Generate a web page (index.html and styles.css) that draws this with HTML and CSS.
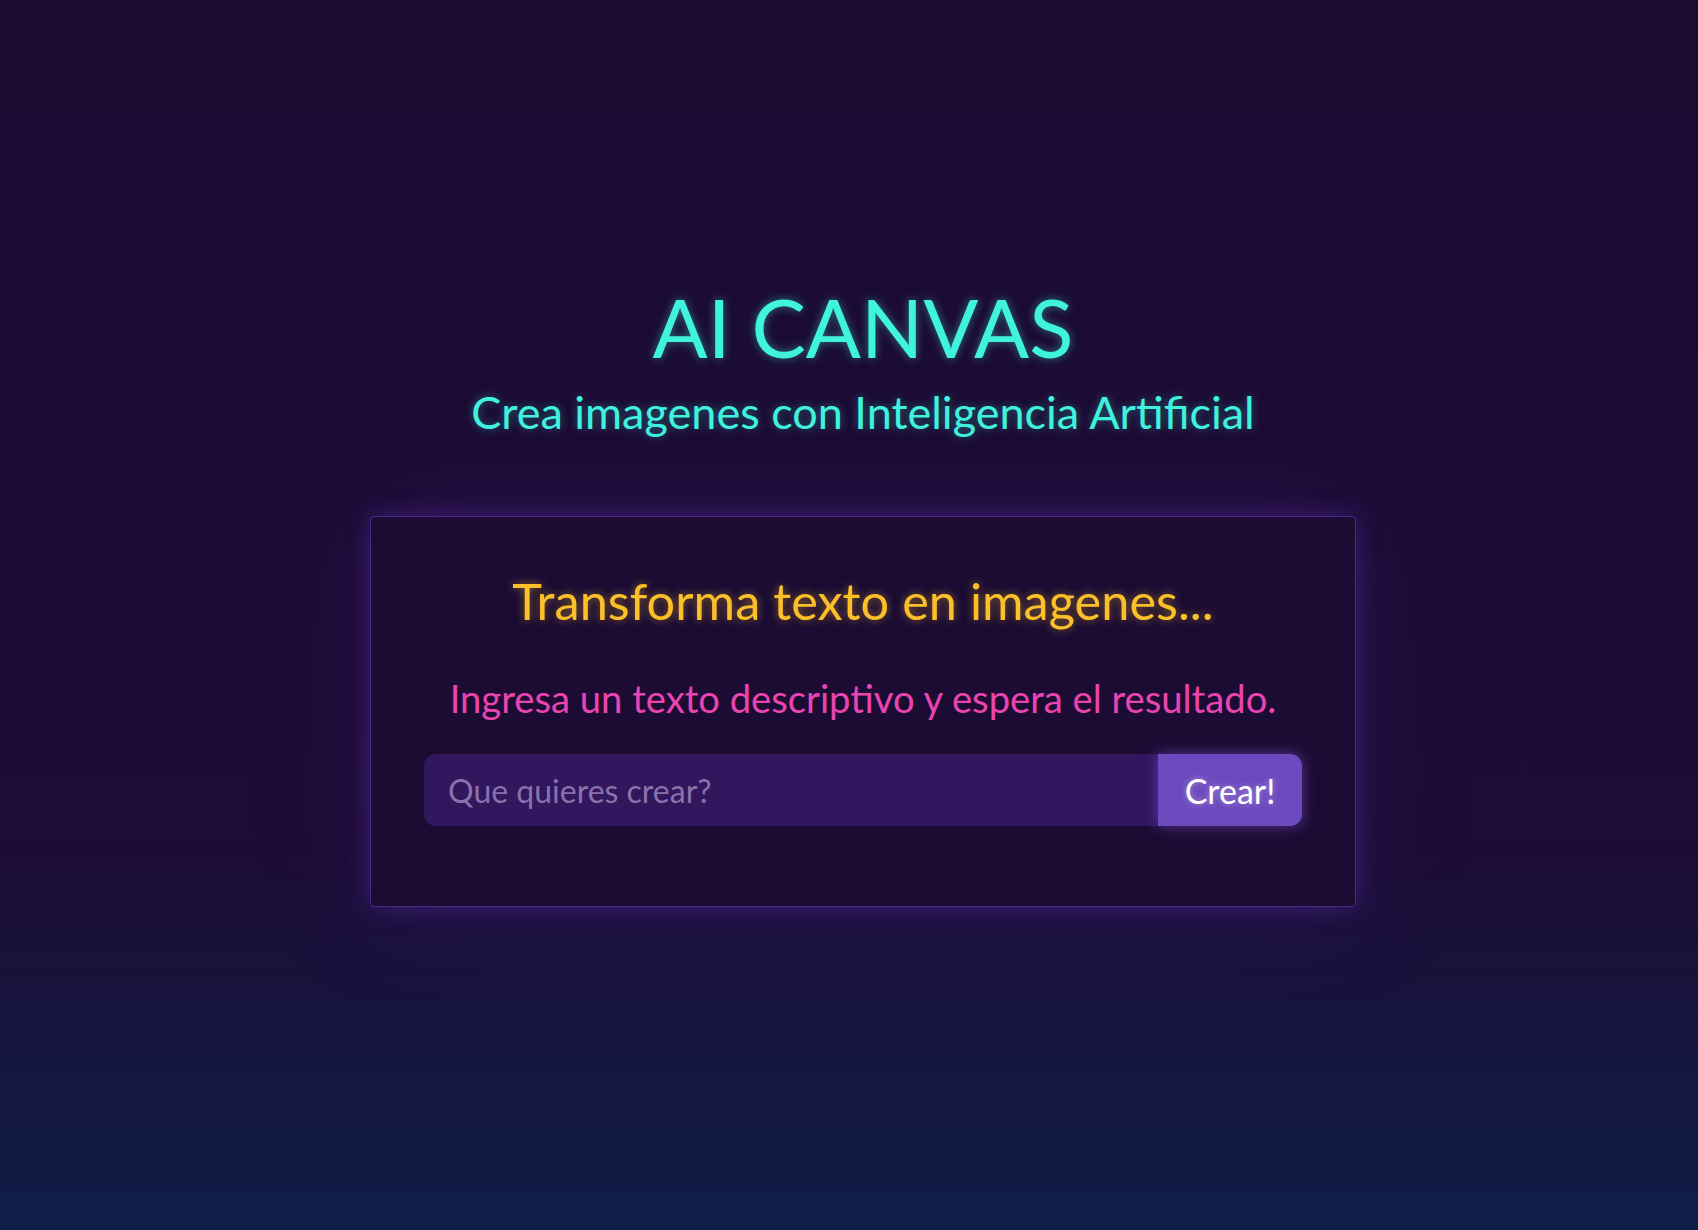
FILE: index.html
```html
<!DOCTYPE html>
<html lang="es">
<head>
<meta charset="utf-8">
<title>AI Canvas</title>
<link rel="stylesheet" href="styles.css">
</head>
<body>
<main class="page">
  <header class="hero">
    <h1 class="title">AI CANVAS</h1>
    <p class="subtitle">Crea imagenes con Inteligencia Artificial</p>
  </header>
  <section class="card">
    <h2 class="card-title">Transforma texto en imagenes...</h2>
    <p class="card-text">Ingresa un texto descriptivo y espera el resultado.</p>
    <form class="prompt">
      <input class="prompt-input" type="text" placeholder="Que quieres crear?">
      <button class="prompt-btn" type="button">Crear!</button>
    </form>
  </section>
</main>
</body>
</html>
```

FILE: styles.css
```css
* { box-sizing: border-box; }
html, body { margin: 0; height: 100%; }
body {
  font-family: Lato, "Open Sans", sans-serif;
  background: linear-gradient(180deg, #1b0b33 0%, #1d0c35 68%, #0f1e47 100%);
  min-height: 1230px;
}
.page {
  display: flex;
  flex-direction: column;
  align-items: center;
  padding-top: 278px;
  padding-left: 28px;
}
.hero {
  display: flex;
  flex-direction: column;
  align-items: center;
}
.title {
  margin: 0;
  font-size: 81.5px;
  font-weight: 400;
  line-height: 1.2;
  color: #40f3df;
  text-shadow: 0 0 10px rgba(64, 245, 224, 0.45);
}
.subtitle {
  margin: 9px 0 0;
  font-size: 45px;
  line-height: 1.2;
  color: #40f3df;
  text-shadow: 0 0 10px rgba(64, 245, 224, 0.4);
}
.card {
  margin-top: 77px;
  width: 986px;
  padding: 54px 53px 80px;
  border: 1px solid #4a2888;
  border-radius: 4px;
  background: #1c0c34;
  box-shadow: 0 0 24px rgba(120, 60, 220, 0.35), 0 0 120px rgba(90, 40, 180, 0.18);
  display: flex;
  flex-direction: column;
  align-items: center;
}
.card-title {
  margin: 0;
  font-size: 50.5px;
  font-weight: 400;
  line-height: 1.2;
  color: #fbbf2a;
  text-shadow: 0 0 8px rgba(251, 191, 36, 0.5);
}
.card-text {
  margin: 45px 0 0;
  font-size: 38.2px;
  line-height: 1.2;
  color: #ea44b0;
}
.prompt {
  margin-top: 32px;
  width: 100%;
  display: flex;
  height: 72px;
}
.prompt-input {
  flex: 1;
  min-width: 0;
  border: 0;
  outline: 0;
  border-radius: 12px 0 0 12px;
  background: #32165e;
  padding: 0 24px;
  font-family: inherit;
  font-size: 32px;
  color: #e8e0ff;
}
.prompt-input::placeholder { color: #8a72aa; }
.prompt-btn {
  width: 144px;
  border: 0;
  border-radius: 0 12px 12px 0;
  background: #6d49be;
  color: #ffffff;
  font-family: inherit;
  font-size: 34px;
  box-shadow: 0 0 14px rgba(140, 90, 230, 0.55);
  text-shadow: 0 0 6px rgba(255, 255, 255, 0.4);
  cursor: pointer;
}
```
